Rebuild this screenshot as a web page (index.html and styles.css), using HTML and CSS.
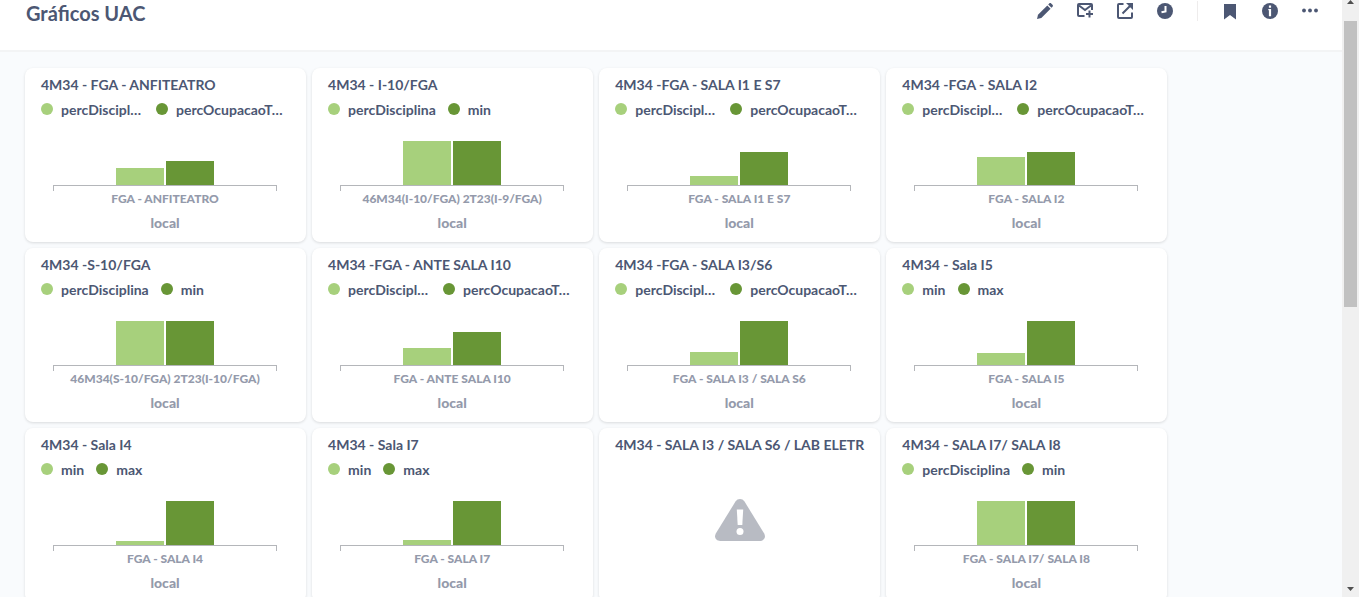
FILE: index.html
```html
<!DOCTYPE html>
<html lang="pt-BR">
<head>
<meta charset="utf-8">
<meta name="viewport" content="width=device-width, initial-scale=1">
<title>Gráficos UAC</title>
<link rel="stylesheet" href="styles.css">
</head>
<body>
<div class="page">
  <header class="header">
    <h1 class="header-title">Gráficos UAC</h1>
    <div class="toolbar">
      <button class="tool" aria-label="Editar"><svg viewBox="0 0 16 16"><path d="M0 16l1-4.300L10.300 2.400l3.300 3.300L4.300 15z"/><path d="M11.200 1.500l1-1c.6-.6 1.400-.6 2 0l1.300 1.300c.6.6.6 1.400 0 2l-1 1z"/></svg></button>
      <button class="tool" aria-label="Assinaturas"><svg viewBox="0 0 16 16"><path class="line" d="M7.500 13H2a1 1 0 0 1-1-1V2a1 1 0 0 1 1-1h12a1 1 0 0 1 1 1v5M2 2.500L8 7l6-4.500"/><path class="line" d="M12.500 7.500v7M9 11h7"/></svg></button>
      <button class="tool" aria-label="Compartilhar"><svg viewBox="0 0 16 16"><path class="line" d="M6.500 1H2a1 1 0 0 0-1 1v12a1 1 0 0 0 1 1h12a1 1 0 0 0 1-1V9.500M5.500 10.500L14 2"/><path d="M9 0h7v7l-2.300-2.300-2.400-2.400z"/></svg></button>
      <button class="tool" aria-label="Atualização automática"><svg viewBox="0 0 16 16"><circle cx="8" cy="8" r="8"/><path class="cut" d="M8.500 3v5.500L4.500 9.300"/></svg></button>
      <span class="divider"></span>
      <button class="tool" aria-label="Favoritar"><svg viewBox="0 0 16 16"><path d="M2 1h12v15.500l-6-4.500-6 4.500z"/></svg></button>
      <button class="tool" aria-label="Informações"><svg viewBox="0 0 16 16"><circle cx="8" cy="8" r="8"/><path class="hole" d="M6.900 2.500h2.200v2.200H6.900zM6.300 6h2.800v7.200H6.900V7.200h-.6z"/></svg></button>
      <button class="tool" aria-label="Mais opções"><svg viewBox="0 0 16 16"><circle cx="2" cy="7.500" r="1.900"/><circle cx="8" cy="7.500" r="1.900"/><circle cx="14" cy="7.500" r="1.900"/></svg></button>
    </div>
  </header>
  <main class="grid">
    <article class="card">
      <h2 class="card-title">4M34 - FGA - ANFITEATRO</h2>
      <ul class="legend"><li class="key light short">percDiscipl…</li><li class="key dark">percOcupacaoT…</li></ul>
      <div class="chart"><div class="bars"><i class="bar light" style="height:17px"></i><i class="bar dark" style="height:24px"></i></div><div class="axis"></div><p class="tick">FGA - ANFITEATRO</p><p class="axis-name">local</p></div>
    </article>
    <article class="card">
      <h2 class="card-title">4M34 - I-10/FGA</h2>
      <ul class="legend"><li class="key light">percDisciplina</li><li class="key dark">min</li></ul>
      <div class="chart"><div class="bars"><i class="bar light" style="height:44px"></i><i class="bar dark" style="height:44px"></i></div><div class="axis"></div><p class="tick">46M34(I-10/FGA) 2T23(I-9/FGA)</p><p class="axis-name">local</p></div>
    </article>
    <article class="card">
      <h2 class="card-title">4M34 -FGA - SALA I1 E S7</h2>
      <ul class="legend"><li class="key light short">percDiscipl…</li><li class="key dark">percOcupacaoT…</li></ul>
      <div class="chart"><div class="bars"><i class="bar light" style="height:9px"></i><i class="bar dark" style="height:33px"></i></div><div class="axis"></div><p class="tick">FGA - SALA I1 E S7</p><p class="axis-name">local</p></div>
    </article>
    <article class="card">
      <h2 class="card-title">4M34 -FGA - SALA I2</h2>
      <ul class="legend"><li class="key light short">percDiscipl…</li><li class="key dark">percOcupacaoT…</li></ul>
      <div class="chart"><div class="bars"><i class="bar light" style="height:28px"></i><i class="bar dark" style="height:33px"></i></div><div class="axis"></div><p class="tick">FGA - SALA I2</p><p class="axis-name">local</p></div>
    </article>
    <article class="card">
      <h2 class="card-title">4M34 -S-10/FGA</h2>
      <ul class="legend"><li class="key light">percDisciplina</li><li class="key dark">min</li></ul>
      <div class="chart"><div class="bars"><i class="bar light" style="height:44px"></i><i class="bar dark" style="height:44px"></i></div><div class="axis"></div><p class="tick">46M34(S-10/FGA) 2T23(I-10/FGA)</p><p class="axis-name">local</p></div>
    </article>
    <article class="card">
      <h2 class="card-title">4M34 -FGA - ANTE SALA I10</h2>
      <ul class="legend"><li class="key light short">percDiscipl…</li><li class="key dark">percOcupacaoT…</li></ul>
      <div class="chart"><div class="bars"><i class="bar light" style="height:17px"></i><i class="bar dark" style="height:33px"></i></div><div class="axis"></div><p class="tick">FGA - ANTE SALA I10</p><p class="axis-name">local</p></div>
    </article>
    <article class="card">
      <h2 class="card-title">4M34 -FGA - SALA I3/S6</h2>
      <ul class="legend"><li class="key light short">percDiscipl…</li><li class="key dark">percOcupacaoT…</li></ul>
      <div class="chart"><div class="bars"><i class="bar light" style="height:13px"></i><i class="bar dark" style="height:44px"></i></div><div class="axis"></div><p class="tick">FGA - SALA I3 / SALA S6</p><p class="axis-name">local</p></div>
    </article>
    <article class="card">
      <h2 class="card-title">4M34 - Sala I5</h2>
      <ul class="legend"><li class="key light">min</li><li class="key dark">max</li></ul>
      <div class="chart"><div class="bars"><i class="bar light" style="height:12px"></i><i class="bar dark" style="height:44px"></i></div><div class="axis"></div><p class="tick">FGA - SALA I5</p><p class="axis-name">local</p></div>
    </article>
    <article class="card">
      <h2 class="card-title">4M34 - Sala I4</h2>
      <ul class="legend"><li class="key light">min</li><li class="key dark">max</li></ul>
      <div class="chart"><div class="bars"><i class="bar light" style="height:4px"></i><i class="bar dark" style="height:44px"></i></div><div class="axis"></div><p class="tick">FGA - SALA I4</p><p class="axis-name">local</p></div>
    </article>
    <article class="card">
      <h2 class="card-title">4M34 - Sala I7</h2>
      <ul class="legend"><li class="key light">min</li><li class="key dark">max</li></ul>
      <div class="chart"><div class="bars"><i class="bar light" style="height:5px"></i><i class="bar dark" style="height:44px"></i></div><div class="axis"></div><p class="tick">FGA - SALA I7</p><p class="axis-name">local</p></div>
    </article>
    <article class="card">
      <h2 class="card-title">4M34 - SALA I3 / SALA S6 / LAB ELETR</h2>
      <div class="warning"><svg viewBox="0 0 50 42" role="img" aria-label="Erro"><path d="M20.500 2.500c2.200-3.300 6.800-3.300 9 0L49.200 34.500c2 3.800-.2 7.500-4.500 7.500H5.300C1 42-1.200 38.300.8 34.500z"/><path class="hole" d="M21.800 10.500h6.400L27.300 26h-4.600z"/><circle class="hole" cx="25" cy="32.500" r="3.500"/></svg></div>
    </article>
    <article class="card">
      <h2 class="card-title">4M34 - SALA I7/ SALA I8</h2>
      <ul class="legend"><li class="key light">percDisciplina</li><li class="key dark">min</li></ul>
      <div class="chart"><div class="bars"><i class="bar light" style="height:44px"></i><i class="bar dark" style="height:44px"></i></div><div class="axis"></div><p class="tick">FGA - SALA I7/ SALA I8</p><p class="axis-name">local</p></div>
    </article>
  </main>
</div>
<div class="scrollbar" aria-hidden="true">
  <svg class="arrow" viewBox="0 0 7 4"><path d="M0 4L3.500 0 7 4z"/></svg>
  <div class="track"><div class="thumb"></div></div>
  <svg class="arrow" viewBox="0 0 7 4"><path d="M0 0h7L3.500 4z"/></svg>
</div>
</body>
</html>
```

FILE: styles.css
```css
* { box-sizing: border-box; }

body {
  margin: 0;
  height: 100vh;
  display: flex;
  overflow: hidden;
  background: #f9fbfd;
  color: #4c5773;
  font-family: Lato, sans-serif;
}

h1, h2, p, ul { margin: 0; padding: 0; }

.page { flex: 1; min-width: 0; }

.header {
  display: flex;
  justify-content: space-between;
  align-items: flex-start;
  padding: 0 12px 23px 26px;
  background: #fff;
  border-bottom: 2px solid #f3f4f5;
}

.header-title {
  font-size: 20px;
  line-height: 27px;
  font-weight: 700;
}

.toolbar {
  display: flex;
  align-items: center;
}

.tool {
  display: flex;
  padding: 3px 12px;
  border: 0;
  background: none;
  color: inherit;
}

.tool svg {
  width: 16px;
  height: 16px;
  fill: currentColor;
  overflow: visible;
}

.tool .line {
  fill: none;
  stroke: currentColor;
  stroke-width: 2;
}

.tool .cut {
  fill: none;
  stroke: #fff;
  stroke-width: 2;
}

svg .hole { fill: #fff; }

.divider {
  width: 1px;
  height: 20px;
  margin: 0 12px;
  background: #eeecec;
}

.grid {
  display: grid;
  grid-template-columns: repeat(18, 1fr);
  gap: 6px;
  padding: 16px 31px 16px 25px;
}

.card {
  grid-column: span 4;
  height: 174px;
  padding: 8px 16px;
  display: flex;
  flex-direction: column;
  background: #fff;
  border-radius: 8px;
  box-shadow: 0 1px 3px rgba(0, 0, 0, 0.13);
}

.card:nth-child(4n + 1) { grid-column: 1 / span 4; }

.card-title {
  font-size: 14px;
  line-height: 18px;
  font-weight: 700;
  white-space: nowrap;
}

.legend {
  display: flex;
  gap: 12px;
  margin-top: 7px;
  list-style: none;
  font-size: 14px;
  line-height: 18px;
  font-weight: 700;
  white-space: nowrap;
}

.key {
  display: flex;
  gap: 8px;
}

.key.short { width: 103px; }

.key::before {
  content: "";
  width: 12px;
  height: 12px;
  margin-top: 2px;
  border-radius: 50%;
}

.key.light::before, .bar.light { background: #a7d07c; }
.key.dark::before, .bar.dark { background: #689636; }

.chart {
  flex: 1;
  display: flex;
  flex-direction: column;
  justify-content: flex-end;
  padding: 0 13px 2px 12px;
  text-align: center;
  color: #949aab;
}

.bars {
  display: flex;
  justify-content: center;
  align-items: flex-end;
  gap: 2px;
}

.bar { width: 48px; }

.axis {
  height: 6px;
  border: 1px solid #b4b6ba;
  border-bottom: 0;
}

.tick {
  font-size: 12px;
  line-height: 16px;
  font-weight: 900;
  white-space: nowrap;
}

.axis-name {
  margin-top: 7px;
  font-size: 14px;
  line-height: 18px;
  font-weight: 900;
}

.warning {
  flex: 1;
  display: flex;
  align-items: center;
  justify-content: center;
  padding-bottom: 8px;
}

.warning svg {
  width: 50px;
  height: 42px;
  fill: #b8bbc3;
}

.scrollbar {
  width: 17px;
  display: flex;
  flex-direction: column;
  align-items: center;
  background: #f0f0f0;
}

.arrow {
  width: 7px;
  height: 4px;
  margin-bottom: 6px;
  fill: #505050;
}

.track {
  flex: 1;
  width: 13px;
  padding-top: 11px;
  margin-bottom: 6px;
}

.thumb {
  height: 51%;
  background: #c1c1c1;
}
```
